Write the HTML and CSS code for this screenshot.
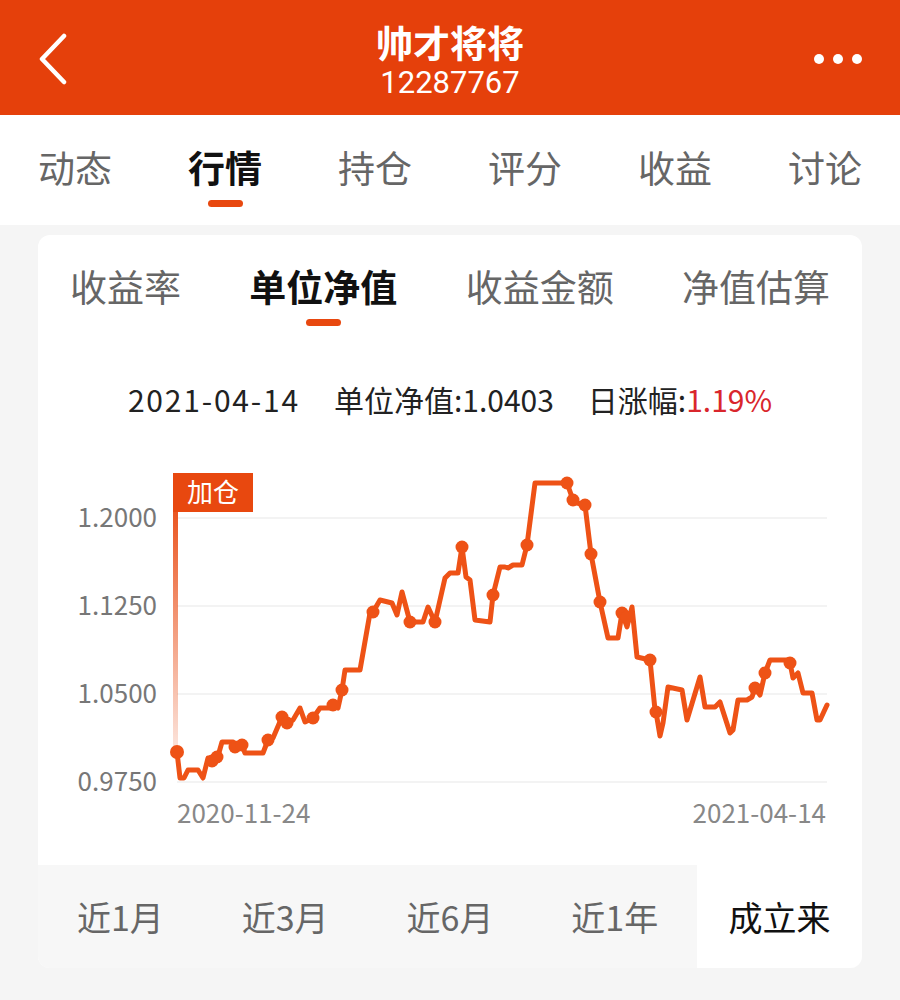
FILE: index.html
```html
<!DOCTYPE html>
<html lang="zh-CN">
<head>
<meta charset="utf-8">
<title>帅才将将</title>
<link rel="stylesheet" href="styles.css">
</head>
<body>
<header class="topbar">
  <svg class="back" width="30" height="52" viewBox="0 0 30 52"><polyline points="26,3 4,26 26,49" fill="none" stroke="#fff" stroke-width="4.5" stroke-linecap="round" stroke-linejoin="round"/></svg>
  <div class="title-wrap">
    <div class="title">帅才将将</div>
    <div class="code">12287767</div>
  </div>
  <svg class="more" width="48" height="12" viewBox="0 0 48 12"><circle cx="5" cy="6" r="5" fill="#fff"/><circle cx="24" cy="6" r="5" fill="#fff"/><circle cx="43" cy="6" r="5" fill="#fff"/></svg>
</header>

<nav class="tabs">
  <div class="tab">动态</div>
  <div class="tab active">行情</div>
  <div class="tab">持仓</div>
  <div class="tab">评分</div>
  <div class="tab">收益</div>
  <div class="tab">讨论</div>
</nav>

<section class="card">
  <div class="subtabs">
    <div class="subtab">收益率</div>
    <div class="subtab active">单位净值</div>
    <div class="subtab">收益金额</div>
    <div class="subtab">净值估算</div>
  </div>

  <div class="info">
    <span class="date">2021-04-14</span>
    <span>单位净值:1.0403</span>
    <span>日涨幅:<em class="up">1.19%</em></span>
  </div>

  <svg class="chart" width="824" height="435" viewBox="38 430 824 435">
    <defs>
      <linearGradient id="fade" x1="0" y1="0" x2="0" y2="1">
        <stop offset="0" stop-color="#ea5520"/>
        <stop offset="1" stop-color="#ea5520" stop-opacity="0.15"/>
      </linearGradient>
    </defs>
    <g class="grid">
      <line x1="177" y1="518" x2="827" y2="518"/>
      <line x1="177" y1="606" x2="827" y2="606"/>
      <line x1="177" y1="694" x2="827" y2="694"/>
      <line x1="177" y1="782" x2="827" y2="782"/>
    </g>
    <g class="ylab">
      <text x="157" y="527">1.2000</text>
      <text x="157" y="615">1.1250</text>
      <text x="157" y="703">1.0500</text>
      <text x="157" y="791">0.9750</text>
    </g>
    <text class="xlab" x="177" y="823">2020-11-24</text>
    <text class="xlab end" x="826" y="823">2021-04-14</text>

    <rect x="173" y="510" width="5" height="242" fill="url(#fade)"/>
    <rect x="173" y="473" width="80" height="39" fill="#e8480f"/>
    <text class="badge" x="213" y="502">加仓</text>

    <polyline class="line" points="177,752 180,778 184,778 188,770 198,770 203,778 208,758 213,760 218,756 222,742 233,742 236,747 242,745 245,753 250,753 263,753 268,740 273,738 282,717 287,723 293,720 300,708 305,722 313,718 320,708 330,708 333,705 338,708 342,690 345,670 360,670 370,613 373,612 380,600 392,603 397,615 402,592 410,622 415,622 423,622 428,607 435,622 445,578 450,573 458,573 462,547 466,577 470,580 475,620 490,622 493,595 500,567 505,567 508,568 513,565 522,565 527,545 535,483 563,483 567,483 573,500 577,503 585,505 591,554 600,602 608,638 618,638 622,613 627,627 632,607 637,657 650,660 655,710 656,712 660,736 663,723 668,687 682,690 687,720 700,677 705,707 715,707 720,702 730,733 733,730 738,700 747,700 752,697 755,688 760,695 765,673 770,660 787,660 790,663 793,678 798,673 803,693 812,693 817,720 820,720 827,705"/>
    <g class="dots">
      <circle cx="177" cy="752" r="7"/>
      <circle cx="212" cy="761" r="6.5"/>
      <circle cx="217" cy="757" r="6.5"/>
      <circle cx="235" cy="747" r="6.5"/>
      <circle cx="242" cy="745" r="6.5"/>
      <circle cx="268" cy="740" r="6.5"/>
      <circle cx="282" cy="717" r="6.5"/>
      <circle cx="287" cy="723" r="6.5"/>
      <circle cx="313" cy="718" r="6.5"/>
      <circle cx="333" cy="705" r="6.5"/>
      <circle cx="342" cy="690" r="6.5"/>
      <circle cx="373" cy="612" r="6.5"/>
      <circle cx="410" cy="622" r="6.5"/>
      <circle cx="435" cy="622" r="6.5"/>
      <circle cx="462" cy="547" r="6.5"/>
      <circle cx="493" cy="595" r="6.5"/>
      <circle cx="527" cy="545" r="6.5"/>
      <circle cx="567" cy="483" r="6.5"/>
      <circle cx="573" cy="500" r="6.5"/>
      <circle cx="585" cy="505" r="6.5"/>
      <circle cx="591" cy="554" r="6.5"/>
      <circle cx="600" cy="602" r="6.5"/>
      <circle cx="622" cy="613" r="6.5"/>
      <circle cx="627" cy="617" r="6.5"/>
      <circle cx="650" cy="660" r="6.5"/>
      <circle cx="656" cy="712" r="6.5"/>
      <circle cx="755" cy="688" r="6.5"/>
      <circle cx="765" cy="673" r="6.5"/>
      <circle cx="790" cy="663" r="6.5"/>
    </g>
  </svg>

  <div class="periods">
    <div class="period">近1月</div>
    <div class="period">近3月</div>
    <div class="period">近6月</div>
    <div class="period">近1年</div>
    <div class="period active">成立来</div>
  </div>
</section>
</body>
</html>
```

FILE: styles.css
```css
* { box-sizing: border-box; }
html, body { margin: 0; padding: 0; }
body {
  background: #f5f5f5;
  font-family: "Noto Sans CJK SC", "Noto Sans", sans-serif;
  width: 900px;
  height: 1000px;
  overflow: hidden;
}

.topbar {
  display: grid;
  grid-template-columns: 1fr auto 1fr;
  align-items: start;
  height: 115px;
  background: #e5400b;
  color: #fff;
}
.back { display: block; margin: 33px 0 0 38px; justify-self: start; }
.more { display: block; margin: 53px 38px 0 0; justify-self: end; }
.title-wrap { padding-top: 22px; text-align: center; }
.title { font-size: 37px; line-height: 40px; font-weight: 700; }
.code {
  margin-top: 4px;
  font-family: "Roboto", "Liberation Sans", sans-serif;
  font-size: 31px;
  line-height: 34px;
}

.tabs {
  display: flex;
  justify-content: space-between;
  height: 110px;
  padding: 34px 38px 0;
  background: #fff;
}
.tab {
  display: flex;
  flex-direction: column;
  align-items: center;
  font-size: 37px;
  line-height: 37px;
  color: #666;
}
.tab.active { color: #111; font-weight: 700; }
.tab.active::after,
.subtab.active::after {
  content: "";
  display: block;
  width: 35px;
  height: 7px;
  margin-top: 14px;
  border-radius: 4px;
  background: #e8480f;
}

.card {
  margin: 10px 38px 0;
  background: #fff;
  border-radius: 12px;
  overflow: hidden;
}
.subtabs {
  display: flex;
  justify-content: space-between;
  padding: 33px 32px 0;
  height: 91px;
}
.subtab {
  display: flex;
  flex-direction: column;
  align-items: center;
  font-size: 37px;
  line-height: 37px;
  color: #666;
}
.subtab.active { color: #111; font-weight: 700; }

.info {
  display: flex;
  justify-content: center;
  gap: 34px;
  margin-top: 58px;
  margin-bottom: 16px;
  font-size: 30px;
  line-height: 30px;
  color: #222;
}
.info .date { letter-spacing: 1.8px; }
.info em { font-style: normal; }
.info .up { color: #d9262c; }

.chart { display: block; }
.chart .grid line { stroke: #efefef; stroke-width: 1.5; }
.chart .ylab text {
  font-family: "Noto Sans CJK SC", "Noto Sans", sans-serif;
  font-size: 26px;
  fill: #777;
  text-anchor: end;
}
.chart .xlab {
  font-family: "Noto Sans CJK SC", "Noto Sans", sans-serif;
  font-size: 26px;
  fill: #888;
}
.chart .xlab.end { text-anchor: end; }
.chart .badge {
  font-family: "Noto Sans CJK SC", "Noto Sans", sans-serif;
  font-size: 26px;
  fill: #fff;
  text-anchor: middle;
}
.chart .line {
  fill: none;
  stroke: #ee5216;
  stroke-width: 5;
  stroke-linejoin: round;
  stroke-linecap: round;
}
.chart .dots circle { fill: #ee5216; }

.periods {
  display: grid;
  grid-template-columns: repeat(5, 1fr);
  height: 103px;
  background: #f7f7f7;
}
.period {
  display: flex;
  align-items: center;
  justify-content: center;
  font-size: 34px;
  color: #666;
}
.period.active { background: #fff; color: #111; }
```
